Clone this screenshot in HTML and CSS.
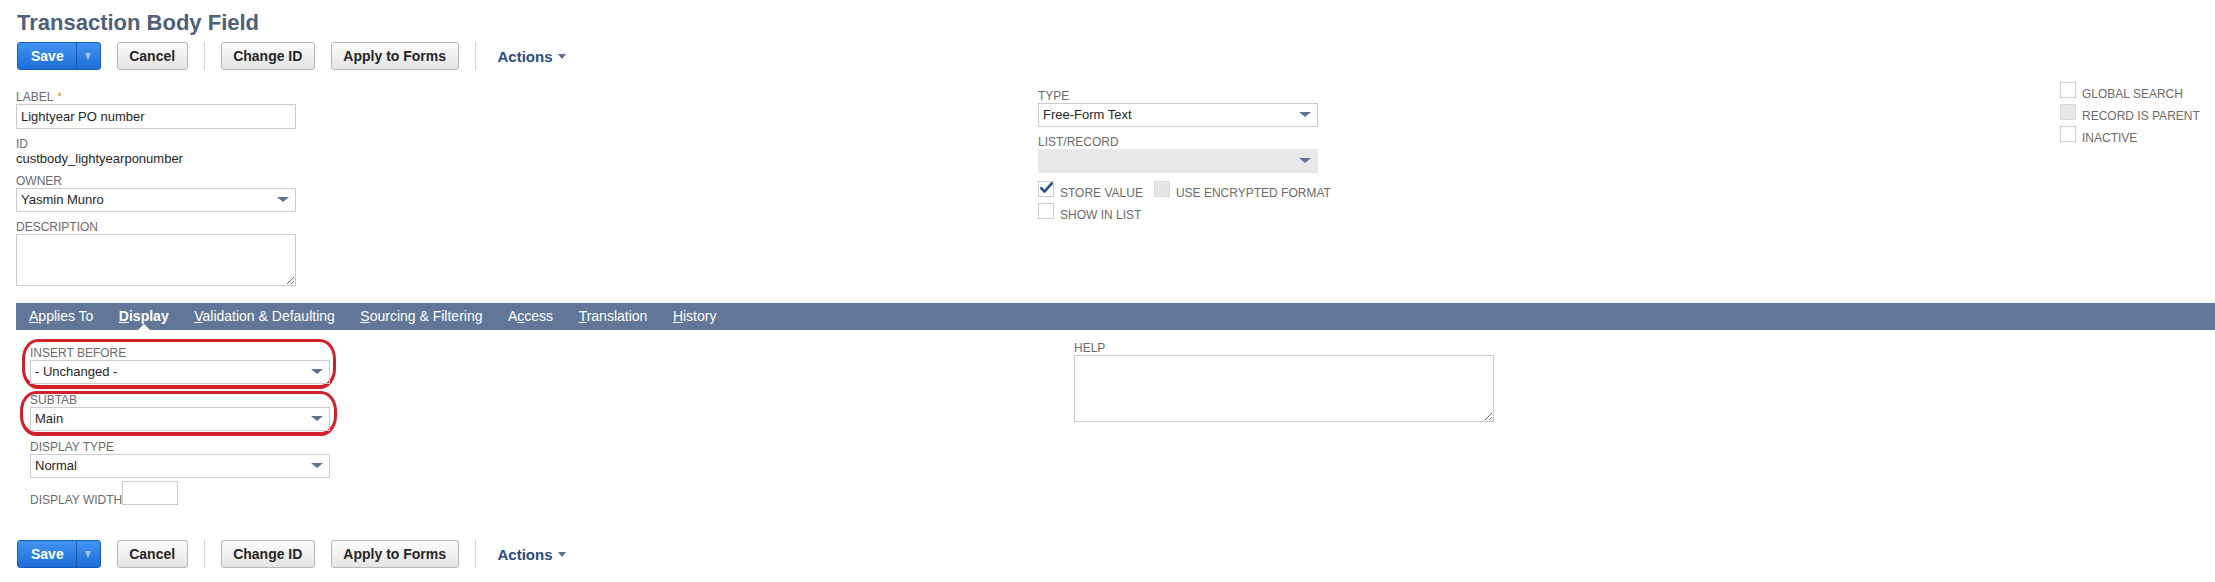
FILE: index.html
```html
<!DOCTYPE html>
<html lang="en">
  <head>
    <meta charset="UTF-8" />
    <meta name="viewport" content="width=device-width, initial-scale=1.0" />
    <title>Transaction Body Field</title>
    <link rel="stylesheet" href="styles.css">
  </head>
  <body>
    <div class="page">
      <h1 class="page-title">Transaction Body Field</h1>

      <!-- Top buttons -->
      <div class="button-bar button-bar-top">
        <div class="split-btn">
          <button class="split-main">Save</button>
          <span class="split-menu"><span class="split-arrow"></span></span>
        </div>
        <button class="btn">Cancel</button>
        <span class="bar-divider"></span>
        <button class="btn">Change ID</button>
        <button class="btn">Apply to Forms</button>
        <span class="bar-divider"></span>
        <span class="actions-menu">Actions<span class="caret"></span></span>
      </div>

      <!-- Main fields -->
      <div class="main-fields">
        <div class="field-col field-col-left">
          <div class="field">
            <label class="field-label">Label<span class="required">*</span></label>
            <input class="text-input" type="text" value="Lightyear PO number" />
          </div>
          <div class="field">
            <span class="field-label">ID</span>
            <div class="field-value">custbody_lightyearponumber</div>
          </div>
          <div class="field">
            <span class="field-label">Owner</span>
            <div class="select">Yasmin Munro</div>
          </div>
          <div class="field">
            <span class="field-label">Description</span>
            <textarea class="textarea"></textarea>
          </div>
        </div>

        <div class="field-col field-col-mid">
          <div class="field">
            <span class="field-label">Type</span>
            <div class="select">Free-Form Text</div>
          </div>
          <div class="field">
            <span class="field-label">List/Record</span>
            <div class="select select-disabled"></div>
          </div>
          <div class="check-row">
            <span class="check-pair">
              <span class="checkbox">
                <svg viewBox="0 0 16 16" width="16" height="16"><path d="M3.2 7.2 L6.4 10.6 L13.8 2.4" fill="none" stroke="#2a4f8c" stroke-width="2.6" stroke-linecap="round" stroke-linejoin="round"/></svg>
              </span>
              <span class="check-text">Store Value</span>
            </span>
            <span class="check-pair">
              <span class="checkbox checkbox-disabled"></span>
              <span class="check-text">Use Encrypted Format</span>
            </span>
          </div>
          <div class="check-row">
            <span class="check-pair">
              <span class="checkbox"></span>
              <span class="check-text">Show in List</span>
            </span>
          </div>
        </div>

        <div class="field-col field-col-right">
          <div class="check-row">
            <span class="check-pair">
              <span class="checkbox"></span>
              <span class="check-text">Global Search</span>
            </span>
          </div>
          <div class="check-row">
            <span class="check-pair">
              <span class="checkbox checkbox-disabled"></span>
              <span class="check-text">Record is Parent</span>
            </span>
          </div>
          <div class="check-row">
            <span class="check-pair">
              <span class="checkbox"></span>
              <span class="check-text">Inactive</span>
            </span>
          </div>
        </div>
      </div>

      <!-- Subtabs -->
      <div class="subtab-bar">
        <span class="subtab"><u>A</u>pplies To</span>
        <span class="subtab subtab-active"><u>D</u>isplay</span>
        <span class="subtab"><u>V</u>alidation &amp; Defaulting</span>
        <span class="subtab"><u>S</u>ourcing &amp; Filtering</span>
        <span class="subtab">A<u>c</u>cess</span>
        <span class="subtab"><u>T</u>ranslation</span>
        <span class="subtab"><u>H</u>istory</span>
      </div>

      <div class="subtab-body">
        <div class="field-col field-col-display">
          <div class="field field-marked">
            <span class="field-label">Insert Before</span>
            <div class="select select-wide">- Unchanged -</div>
          </div>
          <div class="field field-marked field-marked-second">
            <span class="field-label">Subtab</span>
            <div class="select select-wide">Main</div>
          </div>
          <div class="field field-tight">
            <span class="field-label">Display Type</span>
            <div class="select select-wide">Normal</div>
          </div>
          <div class="width-row">
            <span class="width-text">Display Width</span>
            <span class="width-box"></span>
          </div>
        </div>
        <div class="field-col">
          <div class="field">
            <span class="field-label">Help</span>
            <textarea class="textarea textarea-help"></textarea>
          </div>
        </div>
      </div>

      <!-- Bottom buttons -->
      <div class="button-bar button-bar-bottom">
        <div class="split-btn">
          <button class="split-main">Save</button>
          <span class="split-menu"><span class="split-arrow"></span></span>
        </div>
        <button class="btn">Cancel</button>
        <span class="bar-divider"></span>
        <button class="btn">Change ID</button>
        <button class="btn">Apply to Forms</button>
        <span class="bar-divider"></span>
        <span class="actions-menu">Actions<span class="caret"></span></span>
      </div>
    </div>
  </body>
</html>
```

FILE: styles.css
```css
* {
  box-sizing: border-box;
}

body {
  margin: 0;
  font-family: "Liberation Sans", Arial, sans-serif;
  color: #262626;
  background: #fff;
}

.page {
  padding: 0 0 0 16px;
}

.page-title {
  margin: 0;
  padding: 10px 0 0 1px;
  font-size: 22px;
  line-height: 26px;
  font-weight: bold;
  color: #4d5f79;
}

/* Button bars */
.button-bar {
  display: flex;
  align-items: center;
  height: 28px;
  margin-left: 1px;
}

.button-bar-top {
  margin-top: 6px;
}

.button-bar-bottom {
  margin-top: 33px;
}

.btn {
  height: 28px;
  padding: 0 11.5px;
  margin-right: 16px;
  border: 1px solid #b7b7b7;
  border-radius: 3px;
  background: linear-gradient(#fcfcfc, #e4e4e4);
  font: bold 14px "Liberation Sans", Arial, sans-serif;
  color: #262626;
}

.split-btn {
  display: flex;
  height: 28px;
  margin-right: 16px;
  border: 1px solid #1b5ebd;
  border-radius: 3px;
  background: linear-gradient(#4293f2, #1d6dd6);
  overflow: hidden;
}

.split-main {
  height: 100%;
  padding: 0 12px 0 13px;
  border: 0;
  background: none;
  font: bold 14px "Liberation Sans", Arial, sans-serif;
  color: #fff;
}

.split-menu {
  display: flex;
  align-items: center;
  justify-content: center;
  width: 24px;
  border-left: 1px solid #1a58ad;
}

.split-arrow {
  border-left: 3.5px solid transparent;
  border-right: 3.5px solid transparent;
  border-top: 7px solid #a3c4ee;
}

.bar-divider {
  width: 1px;
  height: 28px;
  margin-right: 16px;
  background: #d3d3d3;
}

.actions-menu {
  display: flex;
  align-items: center;
  margin-left: 6px;
  font-size: 15px;
  font-weight: bold;
  color: #2a4c81;
}

.caret {
  margin-left: 5px;
  margin-top: 1px;
  border-left: 4px solid transparent;
  border-right: 4px solid transparent;
  border-top: 5px solid #5d6f8d;
}

/* Field layout */
.main-fields {
  display: grid;
  grid-template-columns: 1022px 1022px 1fr;
  margin-top: 12px;
}

.field-col-left {
  padding-top: 8px;
}

.field-col-mid {
  padding-top: 7px;
}

.field {
  margin-bottom: 8px;
}

.field-col > .field:last-child {
  margin-bottom: 0;
}

.field-label {
  display: block;
  font-size: 12px;
  line-height: 14px;
  color: #6b6b6b;
  text-transform: uppercase;
}

.required {
  margin-left: 4px;
  color: #cf9b2f;
}

.field-value {
  font-size: 13px;
  line-height: 15px;
}

.text-input {
  display: block;
  width: 280px;
  height: 25px;
  padding: 0 4px;
  border: 1px solid #cccccc;
  font: 13px "Liberation Sans", Arial, sans-serif;
  color: #262626;
  outline: none;
}

.select {
  position: relative;
  width: 280px;
  height: 24px;
  padding: 0 4px;
  border: 1px solid #cccccc;
  font-size: 13px;
  line-height: 22px;
}

.select::after {
  content: "";
  position: absolute;
  right: 6px;
  top: 8px;
  border-left: 6px solid transparent;
  border-right: 6px solid transparent;
  border-top: 5px solid #5d7393;
}

.select-disabled {
  background: #e8e8e8;
  border-color: #e8e8e8;
}

.select-wide {
  width: 300px;
}

.textarea {
  display: block;
  width: 280px;
  height: 52px;
  margin: 0;
  border: 1px solid #cccccc;
  font: 13px "Liberation Sans", Arial, sans-serif;
}

.textarea-help {
  width: 420px;
  height: 67px;
}

/* Checkboxes */
.check-row {
  display: flex;
  height: 22px;
  white-space: nowrap;
}

.field-col-mid .field + .check-row {
  margin-top: 2px;
}

.check-pair {
  display: flex;
  align-items: flex-start;
  margin-right: 11px;
}

.checkbox {
  flex: none;
  width: 16px;
  height: 16px;
  margin-right: 6px;
  border: 1px solid #cfcfcf;
  background: #fff;
}

.checkbox svg {
  display: block;
  margin: -1px 0 0 -1px;
}

.checkbox-disabled {
  background: #e6e6e6;
  border-color: #d8d8d8;
}

.check-text {
  padding-top: 5px;
  font-size: 12px;
  line-height: 14px;
  color: #6b6b6b;
  text-transform: uppercase;
}

/* Subtabs */
.subtab-bar {
  display: flex;
  gap: 25.5px;
  height: 27px;
  margin-top: 17px;
  padding-left: 13px;
  background: #607799;
}

.subtab {
  position: relative;
  font-size: 14px;
  line-height: 27px;
  color: #fff;
  white-space: nowrap;
}

.subtab-active {
  font-weight: bold;
}

.subtab-active::after {
  content: "";
  position: absolute;
  left: 50%;
  bottom: 0;
  margin-left: -6px;
  border-left: 6px solid transparent;
  border-right: 6px solid transparent;
  border-bottom: 6px solid #fff;
}

.subtab-body {
  display: grid;
  grid-template-columns: 1044px 1fr;
  padding: 11px 0 0 14px;
}

.field-col-display {
  padding-top: 5px;
}

.subtab-body .field {
  margin-bottom: 9px;
}

.subtab-body .field-tight {
  margin-bottom: 3px;
}

/* Red annotation marks */
.field-marked {
  position: relative;
  width: 300px;
}

.field-marked::before {
  content: "";
  position: absolute;
  top: -7px;
  left: -8px;
  right: -6px;
  bottom: -5px;
  border: 3px solid #d3202b;
  border-bottom-width: 4px;
  border-radius: 16px / 20px;
}

.field-marked-second::before {
  top: -2px;
  left: -10px;
  right: -7px;
}

.width-row {
  display: flex;
  align-items: flex-start;
}

.width-text {
  padding-top: 12px;
  font-size: 12px;
  line-height: 14px;
  color: #6b6b6b;
  text-transform: uppercase;
}

.width-box {
  width: 56px;
  height: 24px;
  border: 1px solid #cccccc;
}
```
